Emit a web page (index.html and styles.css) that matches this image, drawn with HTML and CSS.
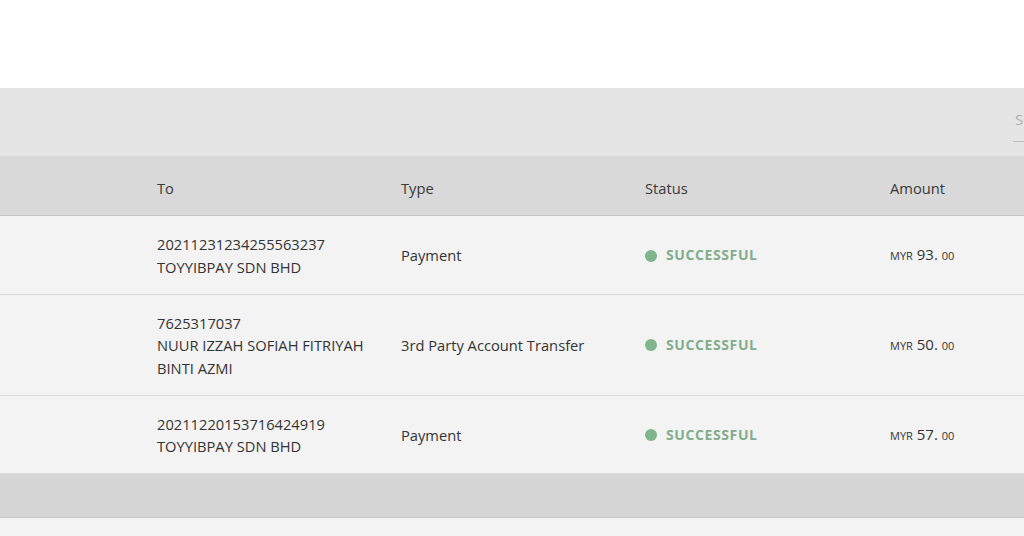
FILE: index.html
```html
<!DOCTYPE html>
<html>
<head>
<meta charset="utf-8">
<link rel="stylesheet" href="styles.css">
</head>
<body>
<div class="page">
  <div class="topbar"></div>
  <div class="toolbar">
    <div class="search"><span class="placeholder">Search</span></div>
  </div>
  <div class="table">
    <div class="row head">
      <div class="cell lead"></div>
      <div class="cell">To</div>
      <div class="cell">Type</div>
      <div class="cell">Status</div>
      <div class="cell">Amount</div>
    </div>
    <div class="row">
      <div class="cell lead"></div>
      <div class="cell">20211231234255563237<br>TOYYIBPAY SDN BHD</div>
      <div class="cell">Payment</div>
      <div class="cell status"><span class="dot"></span>SUCCESSFUL</div>
      <div class="cell amount"><span class="cur">MYR</span> 93. <span class="cents">00</span></div>
    </div>
    <div class="row">
      <div class="cell lead"></div>
      <div class="cell">7625317037<br>NUUR IZZAH SOFIAH FITRIYAH<br>BINTI AZMI</div>
      <div class="cell">3rd Party Account Transfer</div>
      <div class="cell status"><span class="dot"></span>SUCCESSFUL</div>
      <div class="cell amount"><span class="cur">MYR</span> 50. <span class="cents">00</span></div>
    </div>
    <div class="row">
      <div class="cell lead"></div>
      <div class="cell">20211220153716424919<br>TOYYIBPAY SDN BHD</div>
      <div class="cell">Payment</div>
      <div class="cell status"><span class="dot"></span>SUCCESSFUL</div>
      <div class="cell amount"><span class="cur">MYR</span> 57. <span class="cents">00</span></div>
    </div>
    <div class="footer"></div>
  </div>
  <div class="bottom"></div>
</div>
</body>
</html>
```

FILE: styles.css
```css
html, body {
  margin: 0;
  padding: 0;
  background: #ffffff;
  overflow: hidden;
}
body {
  width: 1024px;
  height: 536px;
  font-family: "Open Sans", "Noto Sans", sans-serif;
  color: #333333;
}
.page {
  display: flex;
  flex-direction: column;
}
.topbar {
  height: 88px;
  background: #ffffff;
}
.toolbar {
  height: 68px;
  background: #e5e5e5;
  display: flex;
  align-items: flex-start;
  padding-left: 1013px;
  box-sizing: border-box;
  overflow: hidden;
}
.search {
  margin-top: 20px;
  width: 200px;
  flex-shrink: 0;
  height: 33px;
  border-bottom: 1px solid #bdbdbd;
  display: flex;
  align-items: flex-start;
}
.placeholder {
  color: #b0b0b0;
  font-size: 15px;
  line-height: 22px;
  padding-left: 2px;
}
.table {
  display: flex;
  flex-direction: column;
}
.row {
  display: grid;
  grid-template-columns: 157px 244px 244px 245px 244px;
  align-items: center;
  background: #f3f3f3;
  border-bottom: 1px solid #dcdcdc;
  padding: 17px 0 15.5px;
  font-size: 14.7px;
  line-height: 22.5px;
  overflow: hidden;
}
.row.head {
  background: #d9d9d9;
  border-bottom: 1px solid #c4c4c4;
  height: 60px;
  padding: 6px 0 0;
  box-sizing: border-box;
  font-size: 14.7px;
  color: #3a3a3a;
}
.cell {
  white-space: nowrap;
}
.status {
  display: flex;
  align-items: center;
  color: #82ad8d;
  font-weight: 700;
  font-size: 14px;
  letter-spacing: 0.6px;
}
.dot {
  width: 12px;
  height: 12px;
  border-radius: 50%;
  background: #7fb58b;
  margin-right: 9px;
}
.amount {
  font-size: 15px;
}
.cur, .cents {
  font-size: 11px;
}
.footer {
  height: 43px;
  background: #d6d6d6;
  border-bottom: 1px solid #c8c8c8;
}
.bottom {
  height: 40px;
  background: #f3f3f3;
}
```
